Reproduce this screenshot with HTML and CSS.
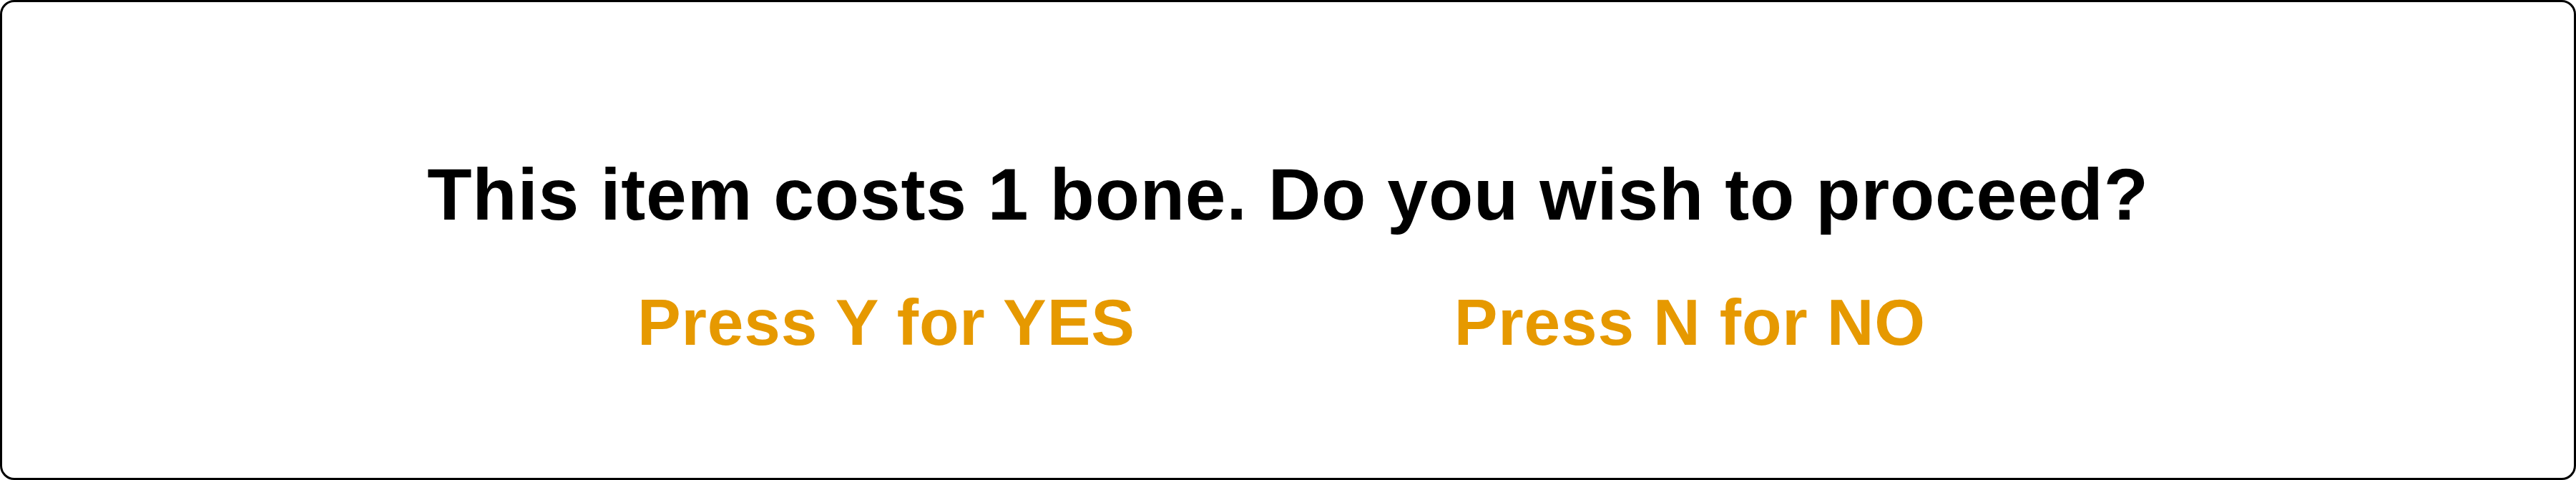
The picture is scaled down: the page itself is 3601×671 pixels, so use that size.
FILE: index.html
```html
<!DOCTYPE html>
<html>
<head>
<meta charset="utf-8">
<link rel="stylesheet" href="styles.css">
</head>
<body>
<div class="dialog">
  <p class="question">This item costs 1 bone. Do you wish to proceed?</p>
  <div class="choices">
    <span class="choice">Press Y for YES</span>
    <span class="choice">Press N for NO</span>
  </div>
</div>
</body>
</html>
```
FILE: styles.css
```css
html, body {
  margin: 0;
  padding: 0;
  background: #ffffff;
}
body {
  width: 3601px;
  height: 671px;
  font-family: "Liberation Sans", Arial, sans-serif;
  font-weight: bold;
}
.dialog {
  box-sizing: border-box;
  width: 3601px;
  height: 671px;
  border: 3px solid #000000;
  border-radius: 20px;
  padding-top: 211px;
  display: flex;
  flex-direction: column;
}
.question {
  margin: 0;
  font-size: 102px;
  letter-spacing: 0.8px;
  text-align: center;
  color: #000000;
}
.choices {
  margin-top: 68px;
  display: flex;
  justify-content: center;
  gap: 446px;
  padding-right: 18px;
}
.choice {
  font-size: 91px;
  letter-spacing: 0.85px;
  color: #e69900;
}
```
